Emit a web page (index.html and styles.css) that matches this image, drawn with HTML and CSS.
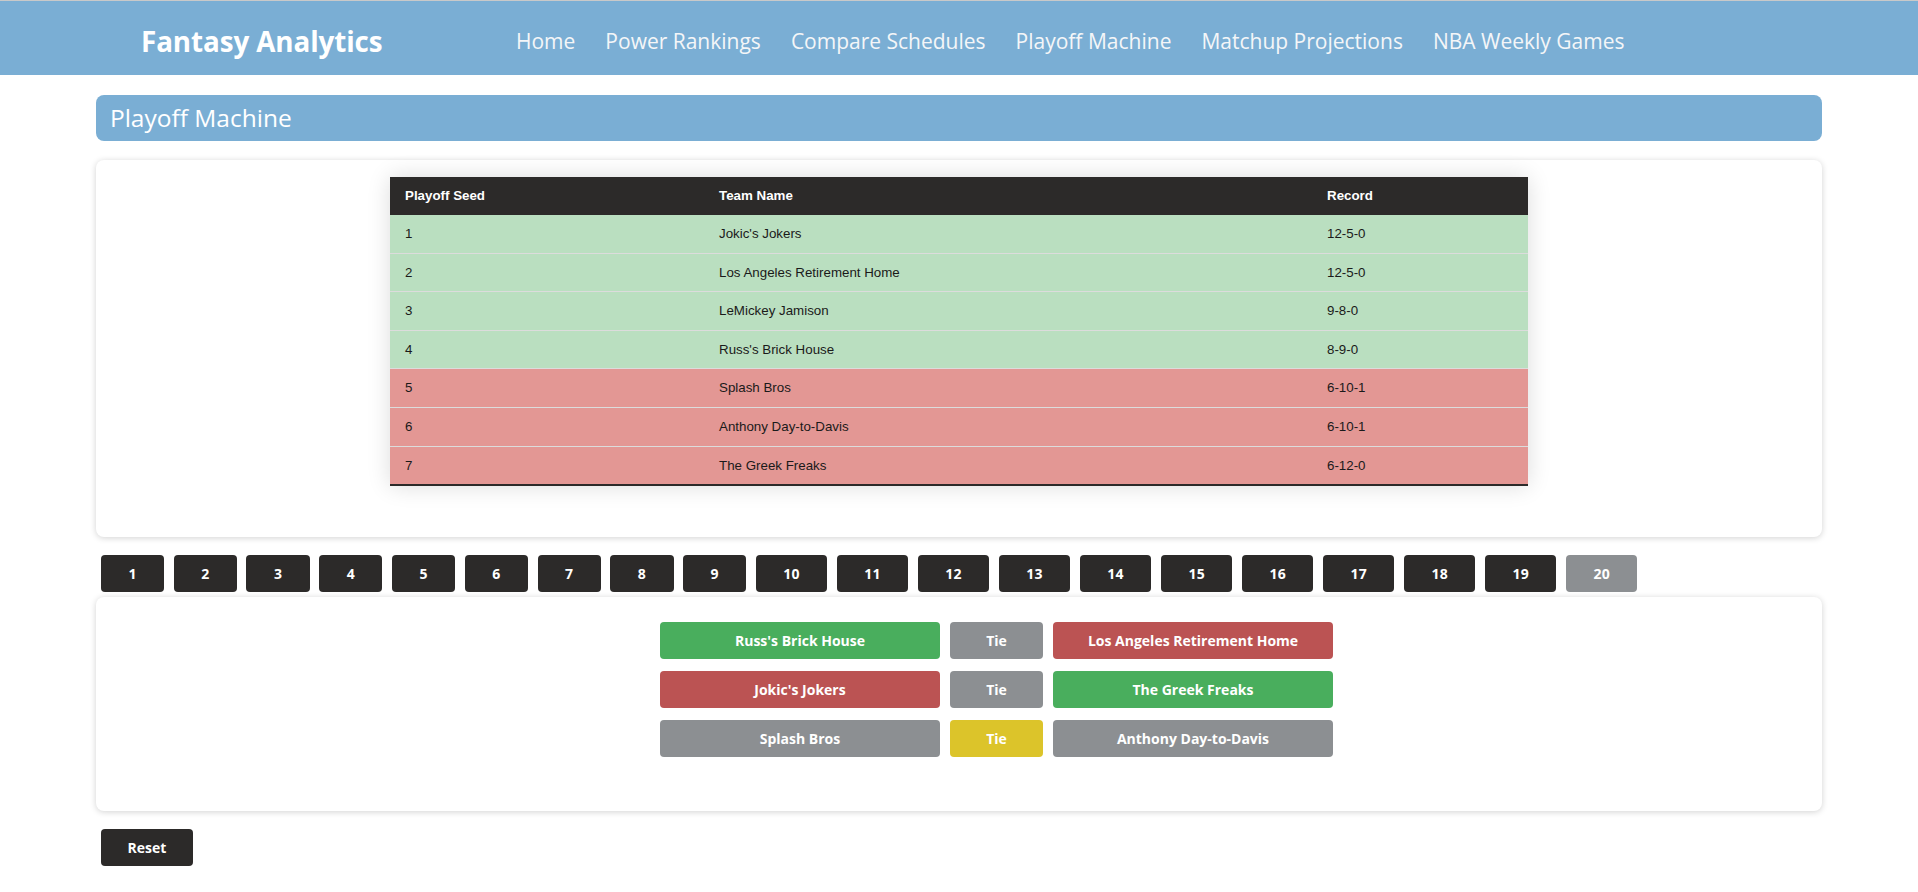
FILE: index.html
```html
<!DOCTYPE html>
<html lang="en">
<head>
<meta charset="utf-8">
<title>Playoff Machine</title>
<link rel="stylesheet" href="styles.css">
</head>
<body>
<header class="topbar">
  <div class="brand">Fantasy Analytics</div>
  <nav class="nav">
    <a href="#">Home</a>
    <a href="#">Power Rankings</a>
    <a href="#">Compare Schedules</a>
    <a href="#">Playoff Machine</a>
    <a href="#">Matchup Projections</a>
    <a href="#">NBA Weekly Games</a>
  </nav>
</header>
<main class="container">
  <div class="titlebar">Playoff Machine</div>
  <section class="card standings-card">
    <table class="standings">
      <colgroup>
        <col class="c-seed">
        <col class="c-team">
        <col class="c-rec">
      </colgroup>
      <thead>
        <tr><th>Playoff Seed</th><th>Team Name</th><th>Record</th></tr>
      </thead>
      <tbody>
        <tr class="in"><td>1</td><td>Jokic's Jokers</td><td>12-5-0</td></tr>
        <tr class="in"><td>2</td><td>Los Angeles Retirement Home</td><td>12-5-0</td></tr>
        <tr class="in"><td>3</td><td>LeMickey Jamison</td><td>9-8-0</td></tr>
        <tr class="in"><td>4</td><td>Russ's Brick House</td><td>8-9-0</td></tr>
        <tr class="out"><td>5</td><td>Splash Bros</td><td>6-10-1</td></tr>
        <tr class="out"><td>6</td><td>Anthony Day-to-Davis</td><td>6-10-1</td></tr>
        <tr class="out"><td>7</td><td>The Greek Freaks</td><td>6-12-0</td></tr>
      </tbody>
    </table>
  </section>
  <div class="weeks">
    <button class="btn">1</button>
    <button class="btn">2</button>
    <button class="btn">3</button>
    <button class="btn">4</button>
    <button class="btn">5</button>
    <button class="btn">6</button>
    <button class="btn">7</button>
    <button class="btn">8</button>
    <button class="btn">9</button>
    <button class="btn">10</button>
    <button class="btn">11</button>
    <button class="btn">12</button>
    <button class="btn">13</button>
    <button class="btn">14</button>
    <button class="btn">15</button>
    <button class="btn">16</button>
    <button class="btn">17</button>
    <button class="btn">18</button>
    <button class="btn">19</button>
    <button class="btn active">20</button>
  </div>
  <section class="card matchups-card">
    <div class="matchups">
      <div class="matchup">
        <button class="pick team win">Russ's Brick House</button>
        <button class="pick tie">Tie</button>
        <button class="pick team loss">Los Angeles Retirement Home</button>
      </div>
      <div class="matchup">
        <button class="pick team loss">Jokic's Jokers</button>
        <button class="pick tie">Tie</button>
        <button class="pick team win">The Greek Freaks</button>
      </div>
      <div class="matchup">
        <button class="pick team">Splash Bros</button>
        <button class="pick tie tied">Tie</button>
        <button class="pick team">Anthony Day-to-Davis</button>
      </div>
    </div>
  </section>
  <div class="actions">
    <button class="btn reset">Reset</button>
  </div>
</main>
</body>
</html>
```

FILE: styles.css
```css
* { box-sizing: border-box; }

body {
  margin: 0;
  background: #ffffff;
  font-family: "Open Sans", "Noto Sans", sans-serif;
  color: #212121;
}

.topbar {
  height: 75px;
  border-top: 1px solid #c9c9c9;
  background: #7aaed4;
  display: flex;
  align-items: center;
  padding: 5px 0 0 141px;
}

.brand {
  color: #ffffff;
  font-weight: 700;
  font-size: 27.8px;
  letter-spacing: -0.1px;
  width: 375px;
}

.nav {
  display: flex;
  gap: 30px;
}

.nav a {
  color: #f4f6f8;
  text-decoration: none;
  font-size: 21px;
}

.container {
  width: 90%;
  margin: 0 auto;
}

.titlebar {
  margin-top: 20px;
  height: 46px;
  background: #7aaed4;
  border-radius: 8px;
  color: #ffffff;
  font-size: 24.5px;
  line-height: 46px;
  padding-left: 14px;
}

.card {
  background: #ffffff;
  border-radius: 8px;
  box-shadow: 0 1px 6px rgba(0, 0, 0, 0.18);
}

.standings-card {
  margin-top: 19px;
  padding: 17px 0 51px;
}

.standings {
  width: 1138px;
  margin: 0 auto;
  table-layout: fixed;
  border-collapse: collapse;
  font-family: "Liberation Sans", Arial, sans-serif;
  font-size: 13.33px;
  box-shadow: 0 0 22px rgba(0, 0, 0, 0.14);
  border-bottom: 2px solid #2c2a29;
}

.c-seed { width: 314px; }
.c-team { width: 608px; }
.c-rec { width: 216px; }

.standings th {
  background: #2c2a29;
  color: #ffffff;
  font-weight: 700;
  text-align: left;
  padding: 12px 15px;
  line-height: 14px;
}

.standings td {
  padding: 12px 15px;
  line-height: 13.6px;
  color: #1a1a1a;
  border-top: 1px solid #dcdcdc;
}

.standings tbody tr:first-child td { border-top: none; }

.standings tr.in td { background: #badfc0; }
.standings tr.out td { background: #e39794; }

.weeks {
  margin-top: 18px;
  padding-left: 5px;
  display: flex;
  gap: 9.5px;
}

.btn {
  height: 37px;
  padding: 0 27.5px;
  border: none;
  border-radius: 4px;
  background: #2c2a29;
  color: #ffffff;
  font-family: "Open Sans", "Noto Sans", sans-serif;
  font-weight: 700;
  font-size: 14px;
  letter-spacing: 0.25px;
}

.btn.active { background: #8c8f92; }

.matchups-card {
  margin-top: 5px;
  padding: 25px 0 54px;
}

.matchups {
  display: flex;
  flex-direction: column;
  align-items: center;
  gap: 12px;
  padding-left: 75px;
}

.matchup {
  display: flex;
  gap: 10px;
}

.pick {
  height: 37px;
  border: none;
  border-radius: 4px;
  color: #ffffff;
  font-family: "Open Sans", "Noto Sans", sans-serif;
  font-weight: 700;
  font-size: 14px;
  background: #8c8f92;
}

.pick.team { width: 280px; }
.pick.tie { width: 93px; }
.pick.win { background: #49ae5d; }
.pick.loss { background: #bb5353; }
.pick.tied { background: #dcc42a; }

.actions {
  margin-top: 18px;
  padding-left: 5px;
}

.reset {
  width: 92px;
  padding: 0;
  letter-spacing: 0;
}
```
